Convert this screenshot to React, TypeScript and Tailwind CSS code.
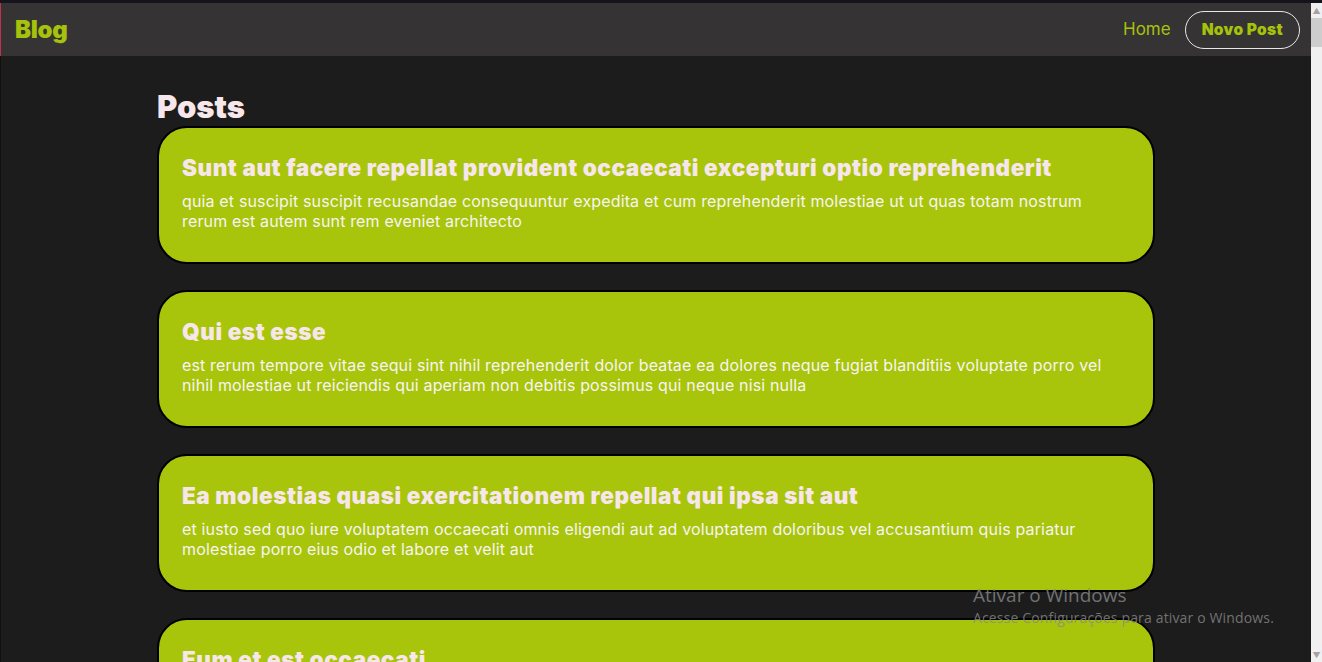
const posts = [
  {
    title: "Sunt aut facere repellat provident occaecati excepturi optio reprehenderit",
    body: "quia et suscipit suscipit recusandae consequuntur expedita et cum reprehenderit molestiae ut ut quas totam nostrum rerum est autem sunt rem eveniet architecto",
  },
  {
    title: "Qui est esse",
    body: "est rerum tempore vitae sequi sint nihil reprehenderit dolor beatae ea dolores neque fugiat blanditiis voluptate porro vel nihil molestiae ut reiciendis qui aperiam non debitis possimus qui neque nisi nulla",
  },
  {
    title: "Ea molestias quasi exercitationem repellat qui ipsa sit aut",
    body: "et iusto sed quo iure voluptatem occaecati omnis eligendi aut ad voluptatem doloribus vel accusantium quis pariatur molestiae porro eius odio et labore et velit aut",
  },
  {
    title: "Eum et est occaecati",
    body: "ullam et saepe reiciendis voluptatem adipisci sit amet autem assumenda provident rerum culpa quis hic commodi nesciunt rem tenetur doloremque ipsam iure quis sunt voluptatem rerum illo velit",
  },
];

function Navbar() {
  return (
    <header className="h-[53px] shrink-0 bg-[#353333] flex items-center justify-between pl-[14px] pr-[11px] border-l border-[#c0304f]">
      <span className="text-[24px] font-black text-[#a6c20b] tracking-[-0.3px]">Blog</span>
      <nav className="flex items-center gap-[14px]">
        <a className="text-[17px] text-[#a6c20b]">Home</a>
        <button className="h-[38px] px-[16px] rounded-[19px] border-[1.5px] border-[#e8e8e8] text-[15.5px] font-black tracking-[0.3px] text-[#a6c20b]">
          Novo Post
        </button>
      </nav>
    </header>
  );
}

function PostCard({ title, body }: { title: string; body: string }) {
  return (
    <article className="bg-[#a8c40b] border-2 border-black rounded-[30px] px-[23px] pt-[26px] pb-[30px] min-h-[138px]">
      <h2 className="text-[22.5px] leading-[28px] font-black text-[#f7e7ea] tracking-[0.55px]">{title}</h2>
      <p className="mt-[9px] text-[16px] leading-[20px] tracking-[0.15px] text-[#f8f4f4]">{body}</p>
    </article>
  );
}

function Scrollbar() {
  return (
    <div className="w-[11px] shrink-0 bg-[#f0f0f0] flex flex-col items-center">
      <div className="h-[15px] flex items-center justify-center text-[8px] text-[#a3a3a3]">▲</div>
      <div className="w-full h-[29px] bg-[#cdcdcd]" />
      <div className="flex-1" />
      <div className="h-[15px] flex items-center justify-center text-[8px] text-[#a3a3a3]">▼</div>
    </div>
  );
}

export default function App() {
  return (
    <div className="h-[662px] overflow-hidden flex flex-col bg-[#1c1c1c] font-['Inter',sans-serif]">
      <div className="h-[3px] shrink-0 bg-[#15131b]" />
      <div className="flex-1 flex min-h-0">
        <div className="flex-1 flex flex-col min-w-0 relative">
          <Navbar />
          <main className="flex-1 overflow-hidden border-l border-[#101010]">
            <div className="w-[998px] mx-auto pt-[32px]">
              <h1 className="text-[31px] leading-[38px] font-black text-[#f7e7ea] tracking-[0px]">Posts</h1>
              <div className="flex flex-col gap-[26px]">
                {posts.map((p, i) => (
                  <PostCard key={i} title={p.title} body={p.body} />
                ))}
              </div>
            </div>
          </main>
          <div className="absolute left-[973px] top-[579px] pointer-events-none font-['Open_Sans',sans-serif] text-[#8a8a8a]/80">
            <div className="text-[19px] leading-[26px]">Ativar o Windows</div>
            <div className="text-[14px] leading-[20px] tracking-[0.15px]">Acesse Configurações para ativar o Windows.</div>
          </div>
        </div>
        <Scrollbar />
      </div>
    </div>
  );
}
